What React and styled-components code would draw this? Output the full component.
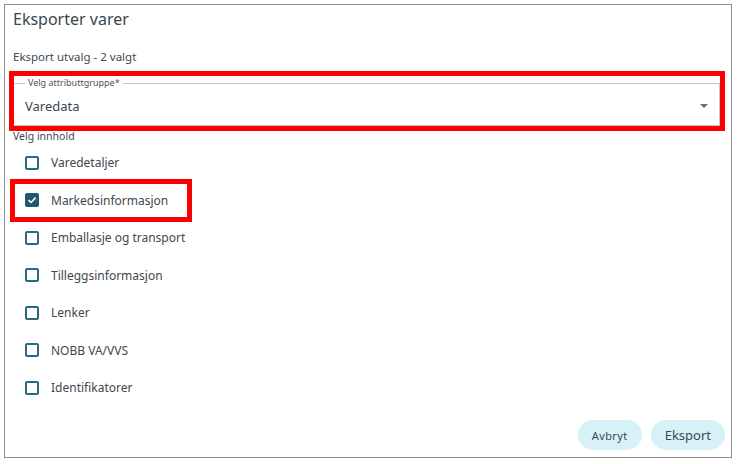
import React from 'react';
import styled, { createGlobalStyle } from 'styled-components';

const GlobalStyle = createGlobalStyle`
  html, body {
    margin: 0;
    padding: 0;
    background: #ffffff;
  }
  body {
    font-family: "Noto Sans", "Open Sans", sans-serif;
    color: #3d4850;
  }
  * { box-sizing: border-box; }
`;

const Dialog = styled.div`
  margin: 4px;
  width: 728px;
  height: 454px;
  border: 1px solid #8e8e8e;
  padding: 4px 6px 7px 8px;
  display: flex;
  flex-direction: column;
`;

const Title = styled.h2`
  margin: 0;
  font-size: 16px;
  font-weight: 400;
  line-height: 20px;
  color: #3a464e;
`;

const Caption = styled.div`
  margin-top: 20px;
  font-size: 11.5px;
  line-height: 16px;
  color: #3d4850;
`;

const Highlight = styled.div`
  margin: 6px 0 0 -4px;
  border: 5px solid #ff0000;
`;

const Field = styled.fieldset`
  margin: 0;
  padding: 0 10px 0 10px;
  height: 50px;
  border: 1px solid #c6c6c6;
  border-left-color: transparent;
  display: flex;
  align-items: center;
  justify-content: space-between;
`;

const Legend = styled.legend`
  padding: 0 3px;
  margin-left: 0;
  font-size: 9px;
  line-height: 14px;
  color: #4a545b;
`;

const Value = styled.span`
  font-size: 13px;
  color: #3a464e;
  margin-top: -4px;
`;

const Caret = styled.span`
  width: 0;
  height: 0;
  margin-right: 1px;
  margin-top: -4px;
  border-left: 4px solid transparent;
  border-right: 4px solid transparent;
  border-top: 4px solid #6f6f6f;
`;

const SectionLabel = styled.div`
  margin-top: -2px;
  font-size: 10.5px;
  line-height: 14px;
  color: #3d4850;
`;

const List = styled.div`
  margin-top: 1px;
  display: flex;
  flex-direction: column;
`;

const Row = styled.label`
  display: flex;
  align-items: center;
  gap: 12px;
  width: fit-content;
  height: 37.5px;
  padding: 0 21px 0 12px;
  font-size: 12px;
  color: #3d4850;
  outline: ${p => (p.$highlighted ? '5px solid #ff0000' : 'none')};
  outline-offset: -2px;
`;

const Box = styled.span`
  width: 14px;
  height: 14px;
  border-radius: 2px;
  border: 2px solid ${p => (p.$checked ? '#1d5a72' : '#2c6a82')};
  background: ${p => (p.$checked ? '#1d5a72' : '#ffffff')};
  display: flex;
  align-items: center;
  justify-content: center;
`;

const Footer = styled.div`
  margin-top: auto;
  display: flex;
  justify-content: flex-end;
  gap: 9px;
`;

const Button = styled.button`
  height: 30px;
  padding: 0 ${p => p.$pad || 14}px;
  border: none;
  border-radius: 15px;
  background: #d6f1f8;
  color: #3a4a55;
  font-family: "Noto Sans", "Open Sans", sans-serif;
  font-size: ${p => p.$size || 12}px;
  letter-spacing: ${p => p.$spacing || 0}px;
`;

const items = [
  { label: 'Varedetaljer', checked: false },
  { label: 'Markedsinformasjon', checked: true, highlighted: true },
  { label: 'Emballasje og transport', checked: false },
  { label: 'Tilleggsinformasjon', checked: false },
  { label: 'Lenker', checked: false },
  { label: 'NOBB VA/VVS', checked: false },
  { label: 'Identifikatorer', checked: false },
];

const Check = () => (
  <svg width="10" height="10" viewBox="0 0 10 10">
    <path d="M1.5 5.2 L4 7.5 L8.6 2.6" fill="none" stroke="#ffffff" strokeWidth="1.6" />
  </svg>
);

export default function App() {
  return (
    <>
      <GlobalStyle />
      <Dialog>
        <Title>Eksporter varer</Title>
        <Caption>Eksport utvalg - 2 valgt</Caption>
        <Highlight>
          <Field>
            <Legend>Velg attributtgruppe*</Legend>
            <Value>Varedata</Value>
            <Caret />
          </Field>
        </Highlight>
        <SectionLabel>Velg innhold</SectionLabel>
        <List>
          {items.map(item => (
            <Row key={item.label} $highlighted={item.highlighted}>
              <Box $checked={item.checked}>{item.checked && <Check />}</Box>
              {item.label}
            </Row>
          ))}
        </List>
        <Footer>
          <Button $pad={14} $size={11} $spacing={0.4}>Avbryt</Button>
          <Button $pad={14} $size={13}>Eksport</Button>
        </Footer>
      </Dialog>
    </>
  );
}
